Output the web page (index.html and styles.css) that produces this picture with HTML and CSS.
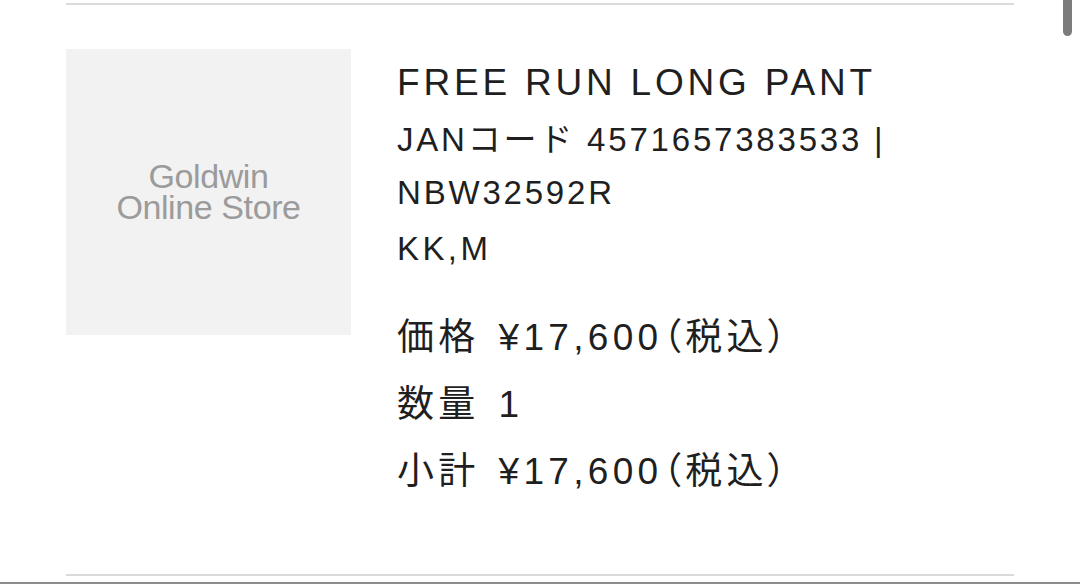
FILE: index.html
```html
<!DOCTYPE html>
<html lang="ja">
<head>
<meta charset="utf-8">
<title>Cart item</title>
<link rel="stylesheet" href="styles.css">
</head>
<body>
<div class="page">
  <section class="cart-list">
    <article class="cart-item">
      <div class="thumb">
        <div class="thumb-logo">
          <span class="logo-line">Goldwin</span>
          <span class="logo-line">Online Store</span>
        </div>
      </div>
      <div class="info">
        <h2 class="title">FREE RUN LONG PANT</h2>
        <p class="code">JANコード 4571657383533 | NBW32592R</p>
        <p class="variant">KK,M</p>
        <ul class="prices">
          <li><span class="label">価格</span><span class="value">¥17,600（税込）</span></li>
          <li><span class="label">数量</span><span class="value">1</span></li>
          <li><span class="label">小計</span><span class="value">¥17,600（税込）</span></li>
        </ul>
      </div>
    </article>
  </section>
  <div class="edge"></div>
</div>
<div class="scroll-thumb"></div>
</body>
</html>
```

FILE: styles.css
```css
html, body {
  margin: 0;
  padding: 0;
  background: #ffffff;
  overflow: hidden;
}

body {
  font-family: "Liberation Sans", Arial, "Noto Sans CJK JP", sans-serif;
  color: #1f1f1f;
}

.page {
  height: 584px;
  display: flex;
  flex-direction: column;
}

.cart-list {
  margin: 3px 66px 0;
}

.cart-item {
  display: flex;
  gap: 46px;
  border-top: 2px solid #dadada;
  border-bottom: 2px solid #dadada;
  padding: 44px 0 69px;
}

.thumb {
  flex: 0 0 285px;
  height: 286px;
  background: #f2f2f2;
  display: flex;
  align-items: center;
  justify-content: center;
}

.thumb-logo {
  display: flex;
  flex-direction: column;
  align-items: center;
  font-size: 34px;
  line-height: 31px;
  letter-spacing: -0.4px;
  color: #9b9b9b;
}

.logo-line {
  display: block;
  height: 31px;
}

.info {
  padding-top: 9px;
}

.title {
  margin: 0;
  font-weight: 400;
  font-size: 37px;
  line-height: 50px;
  letter-spacing: 3.8px;
}

.code {
  margin: 5px 0 0;
  width: 500px;
  font-size: 33px;
  line-height: 53px;
  letter-spacing: 2.8px;
}

.variant {
  margin: 3px 0 0;
  font-size: 33px;
  line-height: 53px;
  letter-spacing: 3.4px;
}

.prices {
  list-style: none;
  margin: 29px 0 0;
  padding: 0;
  font-size: 37px;
  line-height: 67px;
  letter-spacing: 4.3px;
  font-feature-settings: "palt";
}

.prices li {
  display: flex;
}

.label {
  margin-right: 19px;
}

.edge {
  margin-top: 6px;
  height: 2px;
  background: #8c8c8c;
}

.scroll-thumb {
  position: fixed;
  top: 0;
  right: 8px;
  width: 9px;
  height: 36px;
  border-radius: 0 0 5px 5px;
  background: #7c7c7c;
}
```
